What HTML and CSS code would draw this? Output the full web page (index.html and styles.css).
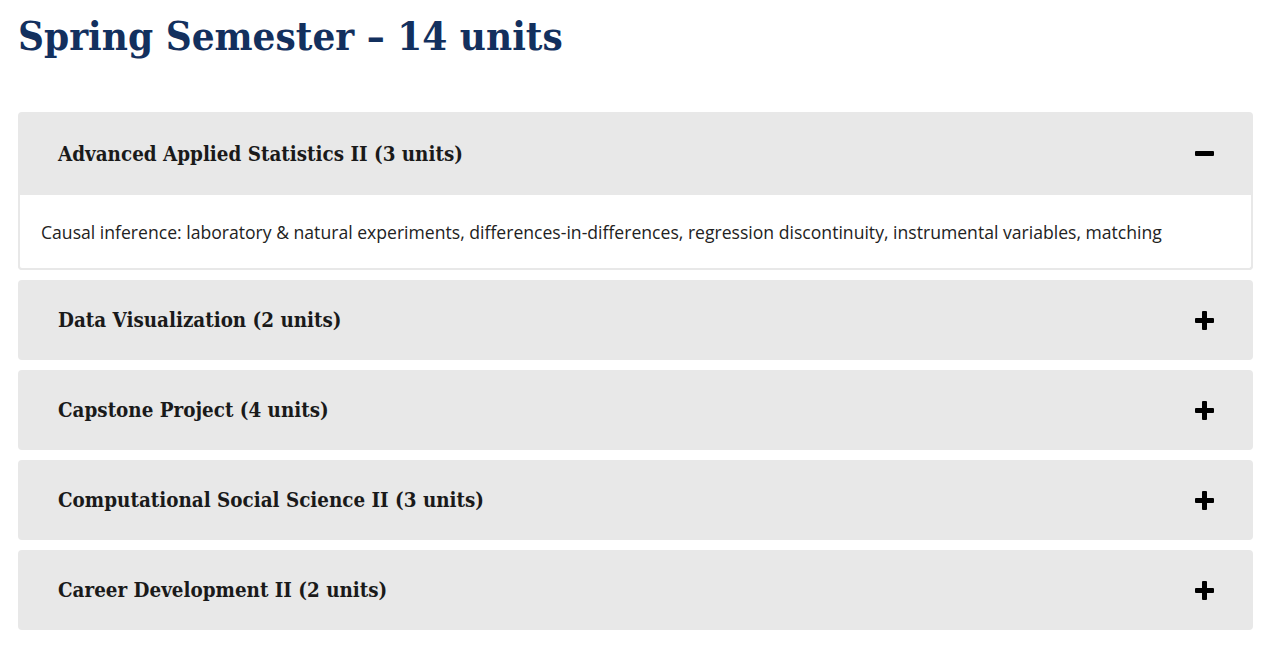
FILE: index.html
```html
<!DOCTYPE html>
<html lang="en">
<head>
    <meta charset="UTF-8">
    <meta name="viewport" content="width=device-width, initial-scale=1.0">
    <title>Spring Semester</title>
    <link rel="stylesheet" href="styles.css">
</head>
<body>
    <div class="semester">
        <h2 class="semester-title">Spring Semester &ndash; 14 units</h2>

        <div class="accordion">
            <div class="item open">
                <div class="item-header">
                    <span class="item-title">Advanced Applied Statistics II (3 units)</span>
                    <span class="toggle minus"></span>
                </div>
                <div class="item-body">
                    Causal inference: laboratory &amp; natural experiments, differences-in-differences, regression discontinuity, instrumental variables, matching
                </div>
            </div>

            <div class="item">
                <div class="item-header">
                    <span class="item-title">Data Visualization (2 units)</span>
                    <span class="toggle plus"></span>
                </div>
            </div>

            <div class="item">
                <div class="item-header">
                    <span class="item-title">Capstone Project (4 units)</span>
                    <span class="toggle plus"></span>
                </div>
            </div>

            <div class="item">
                <div class="item-header">
                    <span class="item-title">Computational Social Science II (3 units)</span>
                    <span class="toggle plus"></span>
                </div>
            </div>

            <div class="item">
                <div class="item-header">
                    <span class="item-title">Career Development II (2 units)</span>
                    <span class="toggle plus"></span>
                </div>
            </div>
        </div>
    </div>
</body>
</html>
```
FILE: styles.css
```css
body {
    font-family: "Open Sans", Arial, sans-serif;
    background-color: #fff;
    margin: 0;
    padding: 0 27px 0 18px;
}

.semester-title {
    font-family: "DejaVu Serif Condensed", "DejaVu Serif", Georgia, serif;
    font-weight: bold;
    font-size: 40px;
    color: #13305e;
    margin: 12px 0 52px 0;
    line-height: 48px;
}

.accordion {
    display: flex;
    flex-direction: column;
    gap: 10px;
}

.item {
    border-radius: 4px;
    background-color: #e8e8e8;
    overflow: hidden;
}

.item-header {
    display: flex;
    justify-content: space-between;
    align-items: center;
    height: 80px;
    padding: 0 39px 0 40px;
}

.item.open .item-header {
    height: 83px;
}

.item-title {
    font-family: "DejaVu Serif Condensed", "DejaVu Serif", Georgia, serif;
    font-weight: bold;
    font-size: 20.4px;
    color: #1a1a1a;
}

.item-body {
    background-color: #fff;
    border: 2px solid #e8e8e8;
    border-top: none;
    border-radius: 0 0 4px 4px;
    padding: 24px 21px 23px 21px;
    font-size: 17.6px;
    line-height: 26px;
    color: #222;
}

.toggle {
    position: relative;
    width: 19px;
    height: 19px;
}

.toggle::before,
.toggle::after {
    content: "";
    position: absolute;
    background-color: #000;
    border-radius: 1px;
}

.toggle::before {
    left: 0;
    top: 7px;
    width: 19px;
    height: 5px;
}

.plus::after {
    left: 7px;
    top: 0;
    width: 5px;
    height: 19px;
}
```
